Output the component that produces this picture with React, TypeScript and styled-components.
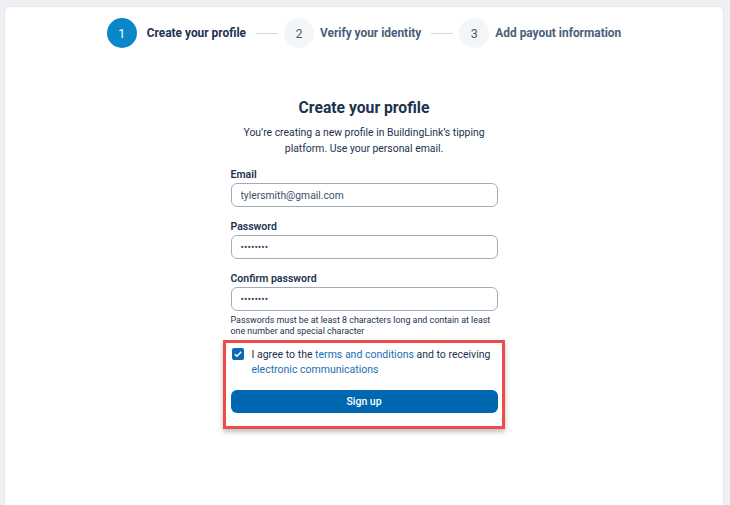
import { FC } from "react";
import styled, { createGlobalStyle } from "styled-components";

const GlobalStyle = createGlobalStyle`
  html, body {
    margin: 0;
    padding: 0;
    background: #eef0f4;
    font-family: Roboto, "Liberation Sans", Arial, sans-serif;
    overflow: hidden;
  }
`;

const Page = styled.div`
  padding: 6px 6px 0 4px;
  height: 505px;
  box-sizing: border-box;
`;

const Card = styled.div`
  background: #fff;
  border: 1px solid #e2e5ea;
  border-radius: 6px;
  height: 520px;
  box-sizing: border-box;
  padding-top: 11px;
  display: flex;
  flex-direction: column;
  align-items: center;
`;

const Stepper = styled.div`
  display: flex;
  align-items: center;
  gap: 10px;
`;

const Step = styled.div<{ $active?: boolean }>`
  display: flex;
  align-items: center;
  gap: ${(p) => (p.$active ? 10 : 6)}px;
`;

const StepCircle = styled.div<{ $active?: boolean }>`
  width: 30px;
  height: 30px;
  border-radius: 50%;
  display: flex;
  align-items: center;
  justify-content: center;
  font-size: 12.5px;
  background: ${(p) => (p.$active ? "#0a87c9" : "#f3f5f8")};
  color: ${(p) => (p.$active ? "#fff" : "#4a607a")};
`;

const StepLabel = styled.span<{ $active?: boolean }>`
  font-size: 11.9px;
  font-weight: 700;
  color: ${(p) => (p.$active ? "#1b3350" : "#4a607a")};
`;

const StepLine = styled.div`
  width: 22px;
  height: 1px;
  background: #d3d8df;
`;

const Title = styled.h1`
  margin: 49px 0 0;
  font-size: 15.7px;
  line-height: 22px;
  font-weight: 700;
  color: #1b3350;
`;

const Subtitle = styled.p`
  margin: 6px 0 0;
  width: 270px;
  text-align: center;
  font-size: 10.4px;
  line-height: 16px;
  color: #1b3350;
`;

const Form = styled.form`
  width: 267px;
  margin-top: 11px;
  display: flex;
  flex-direction: column;
`;

const Field = styled.div<{ $last?: boolean }>`
  display: flex;
  flex-direction: column;
  margin-bottom: ${(p) => (p.$last ? 0 : 13)}px;
`;

const Label = styled.label`
  font-size: 10.5px;
  font-weight: 600;
  line-height: 14px;
  color: #1b3350;
  margin-bottom: 1px;
`;

const Input = styled.input`
  height: 24px;
  box-sizing: border-box;
  border: 1px solid #a3adba;
  border-radius: 6px;
  padding: 0 9px;
  font-family: inherit;
  font-size: 10.3px;
  color: #3d4f66;
  outline: none;
`;

const Hint = styled.p`
  margin: 4px 0 0;
  font-size: 8.9px;
  line-height: 11px;
  color: #1b3350;
`;

const Highlight = styled.div`
  margin: 3px -7px 0 -8px;
  padding: 5px 4px 13px 5px;
  border: 3px solid #f14a4a;
  box-shadow: 0 3px 5px rgba(0, 0, 0, 0.25);
`;

const AgreeRow = styled.label`
  display: flex;
  align-items: flex-start;
  gap: 8px;
  padding-left: 1px;
`;

const Check = styled.span`
  flex: none;
  width: 12px;
  height: 12px;
  margin-top: 0;
  border-radius: 2px;
  background: #0a6ab5;
  display: flex;
  align-items: center;
  justify-content: center;
`;

const AgreeText = styled.span`
  margin-top: -1px;
  font-size: 10.5px;
  line-height: 15px;
  color: #1b3350;
`;

const Link = styled.a`
  color: #1a6fb0;
  text-decoration: none;
`;

const Button = styled.button`
  margin-top: 13px;
  width: 267px;
  height: 23px;
  border: none;
  border-radius: 6px;
  background: #0067b1;
  color: #fff;
  font-family: inherit;
  font-size: 10.5px;
  font-weight: 500;
`;

const steps = ["Create your profile", "Verify your identity", "Add payout information"];

const App: FC = () => {
  return (
    <Page>
      <GlobalStyle />
      <Card>
        <Stepper>
          {steps.map((label, i) => (
            <Step key={label} $active={i === 0}>
              {i > 0 && <StepLine />}
              <StepCircle $active={i === 0}>{i + 1}</StepCircle>
              <StepLabel $active={i === 0}>{label}</StepLabel>
            </Step>
          ))}
        </Stepper>

        <Title>Create your profile</Title>
        <Subtitle>
          You’re creating a new profile in BuildingLink’s tipping platform. Use your personal email.
        </Subtitle>

        <Form onSubmit={(e) => e.preventDefault()}>
          <Field>
            <Label>Email</Label>
            <Input type="text" defaultValue="tylersmith@gmail.com" />
          </Field>
          <Field>
            <Label>Password</Label>
            <Input type="password" defaultValue="password" />
          </Field>
          <Field $last>
            <Label>Confirm password</Label>
            <Input type="password" defaultValue="password" />
            <Hint>
              Passwords must be at least 8 characters long and contain at least one number and
              special character
            </Hint>
          </Field>

          <Highlight>
            <AgreeRow>
              <Check>
                <svg width="10" height="10" viewBox="0 0 10 10">
                  <path d="M1.8 5.2 L4 7.3 L8.3 2.8" fill="none" stroke="#fff" strokeWidth="1.5" />
                </svg>
              </Check>
              <AgreeText>
                I agree to the <Link href="#">terms and conditions</Link> and to receiving{" "}
                <Link href="#">electronic communications</Link>
              </AgreeText>
            </AgreeRow>
            <Button type="submit">Sign up</Button>
          </Highlight>
        </Form>
      </Card>
    </Page>
  );
};

export default App;
